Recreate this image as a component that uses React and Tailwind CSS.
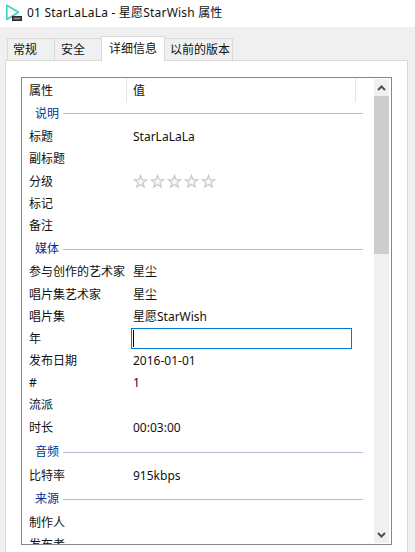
const font = { fontFamily: '"Noto Sans", "Noto Sans CJK SC", sans-serif' };

function Logo() {
  return (
    <svg width="18" height="18" viewBox="0 0 18 18" className="shrink-0">
      <path d="M2.8 1.2 L2.8 15.5 L14.5 8.2 Z" fill="none" stroke="#3bd6c2" strokeWidth="1.6" strokeLinejoin="round" />
      <rect x="8" y="12" width="10" height="5" fill="#2a2a2a" />
      <rect x="9.5" y="13.5" width="7" height="2" fill="#8a8a8a" />
    </svg>
  );
}

function Star() {
  return (
    <svg width="15" height="15" viewBox="0 0 16 16" className="shrink-0">
      <path d="M8 1.5 L9.7 6 L14.5 6.2 L10.7 9.2 L12 14 L8 11.3 L4 14 L5.3 9.2 L1.5 6.2 L6.3 6 Z" fill="#f8f8f8" stroke="#c8c8c8" strokeWidth="1.3" />
    </svg>
  );
}

function Group({ label, h, extra = "" }) {
  return (
    <div className={`flex items-center pl-[13px] ${h} ${extra}`}>
      <span className="text-[#003399]">{label}</span>
      <div className="ml-1 h-px w-[300px] bg-[#b4bdd6]" />
    </div>
  );
}

function Row({ name, h = "h-[22px]", children }) {
  return (
    <div className={`flex items-center ${h}`}>
      <div className="w-[111px] shrink-0 whitespace-nowrap pl-[7px]">{name}</div>
      {children}
    </div>
  );
}

export default function App() {
  return (
    <div style={font} className="flex h-[552px] w-[415px] flex-col overflow-hidden bg-[#f0f0f0] text-[12px] leading-none text-[#111]">
      <div className="flex h-[27px] shrink-0 items-center gap-[5px] bg-white pb-[2px] pl-[4px] text-[12px] tracking-[0.2px]">
        <Logo />
        <span className="whitespace-nowrap">01 StarLaLaLa - 星愿StarWish 属性</span>
      </div>
      <div className="flex h-[33px] shrink-0 items-end pl-[7px]">
        <div className="-mr-px flex h-[22px] w-[48px] items-center border border-b-0 border-[#d9d9d9] pl-[5px] pt-px">常规</div>
        <div className="-mr-px flex h-[22px] w-[48px] items-center border border-b-0 border-[#d9d9d9] pl-[6px] pt-px">安全</div>
        <div className="relative z-10 -mb-px flex h-[25px] w-[64px] items-center border border-b-0 border-[#d9d9d9] bg-white pb-[1px] pl-[7px]">详细信息</div>
        <div className="-ml-px flex h-[22px] w-[69px] items-center border border-b-0 border-[#d9d9d9] pl-[5px] pt-px">以前的版本</div>
      </div>
      <div className="ml-[5px] flex w-[403px] flex-1 flex-col border-l border-r border-t border-[#d9d9d9] bg-white pl-[15px] pt-[16px]">
        <div className="flex h-[468px] w-[371px] border border-[#82878c]">
          <div className="w-[352px] shrink-0 overflow-hidden">
            <div className="flex h-[24px] items-start">
              <div className="h-full w-[105px] border-r border-[#e5e5e5] pl-[7px] pt-[7px]">属性</div>
              <div className="h-full w-[229px] border-r border-[#e5e5e5] pl-[6px] pt-[7px]">值</div>
            </div>
            <Group label="说明" h="h-[24px]" extra="pb-px" />
            <Row name="标题"><span>StarLaLaLa</span></Row>
            <Row name="副标题" />
            <Row name="分级" h="h-[23px]">
              <div className="flex gap-[2px]">
                <Star /><Star /><Star /><Star /><Star />
              </div>
            </Row>
            <Row name="标记" />
            <Row name="备注" />
            <Group label="媒体" h="h-[24px]" />
            <Row name="参与创作的艺术家"><span>星尘</span></Row>
            <Row name="唱片集艺术家" h="h-[23px]"><span>星尘</span></Row>
            <Row name="唱片集"><span>星愿StarWish</span></Row>
            <Row name="年">
              <div className="-ml-[2px] flex h-[21px] w-[221px] items-center self-start border border-[#0078d7] bg-white pl-px">
                <div className="h-[17px] w-px bg-black" />
              </div>
            </Row>
            <Row name="发布日期"><span>2016-01-01</span></Row>
            <Row name="#"><span>1</span></Row>
            <Row name="流派" />
            <Row name="时长" h="h-[24px]"><span>00:03:00</span></Row>
            <Group label="音频" h="h-[24px]" />
            <Row name="比特率" h="h-[23px]"><span>915kbps</span></Row>
            <Group label="来源" h="h-[24px]" />
            <Row name="制作人" h="h-[23px]" />
            <Row name="发布者" />
          </div>
          <div className="my-px flex w-[15px] shrink-0 flex-col bg-[#f0f0f0]">
            <div className="flex h-[17px] items-center justify-center">
              <svg width="9" height="6" viewBox="0 0 9 6"><path d="M1 5 L4.5 1.5 L8 5" fill="none" stroke="#505050" strokeWidth="2" /></svg>
            </div>
            <div className="h-[158px] bg-[#cdcdcd]" />
            <div className="flex-1" />
            <div className="flex h-[17px] items-center justify-center">
              <svg width="9" height="6" viewBox="0 0 9 6"><path d="M1 1 L4.5 4.5 L8 1" fill="none" stroke="#505050" strokeWidth="2" /></svg>
            </div>
          </div>
        </div>
      </div>
    </div>
  );
}
